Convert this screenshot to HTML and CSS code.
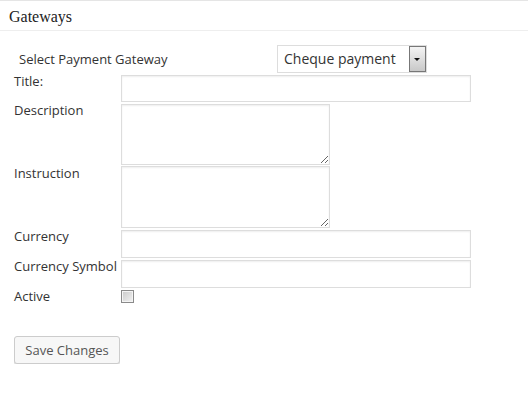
FILE: index.html
```html
<!DOCTYPE html>
<html lang="en">
<head>
    <meta charset="UTF-8">
    <title>Gateways</title>
    <link rel="stylesheet" href="styles.css">
</head>
<body>
    <div class="panel">
        <h3 class="panel-title">Gateways</h3>

        <form class="gateway-form">
            <div class="gateway-select">
                <label for="gateway">Select Payment Gateway</label>
                <span class="select-wrap">
                    <select id="gateway">
                        <option>Cheque payment</option>
                        <option>Bank transfer</option>
                        <option>PayPal</option>
                    </select>
                    <span class="select-arrow"></span>
                </span>
            </div>

            <div class="field-grid">
                <label for="title">Title:</label>
                <input type="text" id="title" class="text-field">

                <label for="description">Description</label>
                <textarea id="description" class="area-field"></textarea>

                <label for="instruction">Instruction</label>
                <textarea id="instruction" class="area-field"></textarea>

                <label for="currency">Currency</label>
                <input type="text" id="currency" class="text-field tall">

                <label for="currency_symbol">Currency Symbol</label>
                <input type="text" id="currency_symbol" class="text-field tall">

                <label for="active">Active</label>
                <input type="checkbox" id="active" class="check-field">
            </div>

            <button type="submit" class="save-button">Save Changes</button>
        </form>
    </div>
</body>
</html>
```

FILE: styles.css
```css
body {
    margin: 0;
    background-color: #fff;
    font-family: "Open Sans", sans-serif;
    font-size: 13px;
    color: #333;
}
.panel {
    border-top: 1px solid #e5e5e5;
}
.panel-title {
    margin: 0;
    height: 29px;
    padding-left: 9px;
    border-bottom: 1px solid #eee;
    font-family: "Liberation Serif", serif;
    font-size: 16px;
    font-weight: normal;
    line-height: 31px;
    color: #222;
}
.gateway-form {
    padding: 14px 0 0 14px;
}
.gateway-select {
    display: flex;
    align-items: center;
    padding-left: 5px;
    height: 28px;
    margin-bottom: 2px;
}
.gateway-select label {
    width: 258px;
    line-height: 16px;
}
.select-wrap {
    position: relative;
    display: inline-block;
}
.select-wrap select {
    appearance: none;
    width: 150px;
    height: 28px;
    margin: 0;
    padding: 0 0 1px 6px;
    border: 1px solid #ddd;
    border-radius: 0;
    background-color: #fff;
    font-family: "Open Sans", sans-serif;
    font-size: 14px;
    color: #333;
}
.select-arrow {
    position: absolute;
    top: 1px;
    right: 1px;
    width: 15px;
    height: 24px;
    border: 1px solid #777;
    background: linear-gradient(#f4f4f4, #c8c8c8);
    pointer-events: none;
}
.select-arrow::after {
    content: "";
    position: absolute;
    top: 11px;
    left: 4px;
    border-left: 3px solid transparent;
    border-right: 3px solid transparent;
    border-top: 3px solid #111;
}
.field-grid {
    display: grid;
    grid-template-columns: 107px auto;
    row-gap: 2px;
    justify-items: start;
    align-items: start;
}
.field-grid label {
    margin-top: -3px;
    line-height: 18px;
    white-space: nowrap;
}
.text-field {
    box-sizing: border-box;
    width: 350px;
    height: 27px;
    margin: 0;
    border: 1px solid #ddd;
    box-shadow: inset 0 1px 2px rgba(0,0,0,0.07);
    background-color: #fff;
}
.text-field.tall {
    height: 28px;
}
.area-field {
    box-sizing: border-box;
    width: 209px;
    height: 61px;
    margin: 0;
    border: 1px solid #ddd;
    box-shadow: inset 0 1px 2px rgba(0,0,0,0.07);
}
#instruction {
    height: 62px;
    margin-top: -1px;
}
.check-field {
    appearance: none;
    width: 13px;
    height: 13px;
    margin: 0;
    border: 1px solid #8a8a8a;
    box-shadow: inset 0 0 0 1px #f4f4f4;
    background: linear-gradient(135deg, #c9c9c9, #f2f2f2);
}
.save-button {
    display: block;
    margin-top: 31px;
    width: 106px;
    height: 28px;
    padding: 0;
    border: 1px solid #ccc;
    border-radius: 3px;
    background-color: #f7f7f7;
    box-shadow: 0 1px 0 #ddd;
    font-family: "Open Sans", sans-serif;
    font-size: 13px;
    color: #555;
    cursor: pointer;
}
```
